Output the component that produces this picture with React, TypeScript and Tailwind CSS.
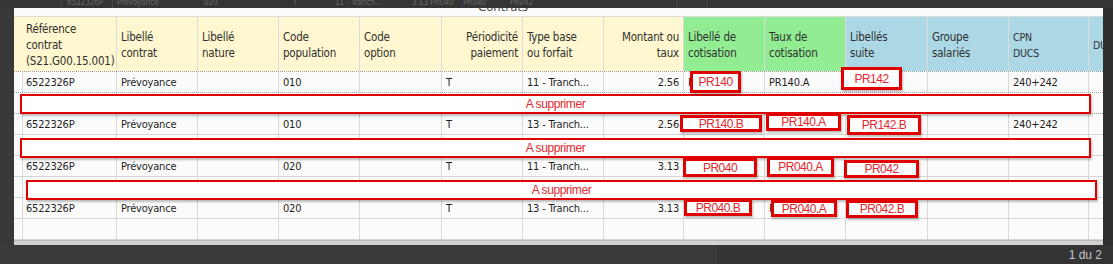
import React from "react";

const Y = "bg-[#fff7cf]";
const G = "bg-[#92ec92]";
const B = "bg-[#acd8e6]";

type H = { t: React.ReactNode; bg: string; right?: boolean; small?: boolean };

const headers: H[] = [
  { t: null, bg: Y },
  { t: <>Référence<br />contrat<br />(S21.G00.15.001)</>, bg: Y },
  { t: <>Libellé<br />contrat</>, bg: Y },
  { t: <>Libellé<br />nature</>, bg: Y },
  { t: <>Code<br />population</>, bg: Y },
  { t: <>Code<br />option</>, bg: Y },
  { t: <>Périodicité<br />paiement</>, bg: Y, right: true },
  { t: <>Type base<br />ou forfait</>, bg: Y },
  { t: <>Montant ou<br />taux</>, bg: Y, right: true },
  { t: <>Libellé de<br />cotisation</>, bg: G },
  { t: <>Taux de<br />cotisation</>, bg: G },
  { t: <>Libellés<br />suite</>, bg: B },
  { t: <>Groupe<br />salariés</>, bg: B },
  { t: <>CPN<br />DUCS</>, bg: B, small: true },
  { t: <>DUCS</>, bg: B, small: true },
];

const E = ["", "", "", "", "", "", "", "", "", "", "", "", "", "", ""];

const rows: { c: string[]; dotted?: boolean }[] = [
  { c: ["", "6522326P", "Prévoyance", "", "010", "", "T", "11 - Tranch...", "2.56", "PR140", "PR140.A", "PR142", "", "240+242", ""], dotted: true },
  { c: E, dotted: true },
  { c: ["", "6522326P", "Prévoyance", "", "010", "", "T", "13 - Tranch...", "2.56", "PR140.B", "PR140.A", "PR142.B", "", "240+242", ""] },
  { c: E },
  { c: ["", "6522326P", "Prévoyance", "", "020", "", "T", "11 - Tranch...", "3.13", "PR040", "PR040.A", "PR042", "", "", ""] },
  { c: E },
  { c: ["", "6522326P", "Prévoyance", "", "020", "", "T", "13 - Tranch...", "3.13", "PR040.B", "PR040.A", "PR042.B", "", "", ""] },
  { c: E },
];

const bigBoxes = [
  { l: 6, t: 86, w: 1071 },
  { l: 6, t: 130, w: 1071 },
  { l: 12, t: 172, w: 1071 },
];

const labels = [
  { x: 676, y: 63, w: 51, h: 22, t: "PR140" },
  { x: 827, y: 59, w: 61, h: 23, t: "PR142" },
  { x: 666, y: 107, w: 82, h: 17, t: "PR140.B" },
  { x: 752, y: 105, w: 75, h: 18, t: "PR140.A" },
  { x: 833, y: 107, w: 74, h: 20, t: "PR142.B" },
  { x: 669, y: 150, w: 74, h: 19, t: "PR040" },
  { x: 753, y: 149, w: 67, h: 20, t: "PR040.A" },
  { x: 830, y: 152, w: 75, h: 18, t: "PR042" },
  { x: 670, y: 191, w: 68, h: 17, t: "PR040.B" },
  { x: 757, y: 192, w: 66, h: 17, t: "PR040.A" },
  { x: 832, y: 192, w: 72, h: 18, t: "PR042.B" },
];

const grid =
  "grid grid-cols-[8px_95px_81px_81px_81px_82px_81px_81px_80px_81px_81px_82px_81px_80px_80px]";
const tableFont =
  "font-['DejaVu_Sans_Condensed','DejaVu_Sans','Noto_Sans',sans-serif] font-stretch-condensed";
const redFont = "font-['Liberation_Sans',Arial,sans-serif]";

export default function App() {
  return (
    <div className="w-[1113px] h-[264px] bg-[#3a3a3a] flex flex-col overflow-hidden">
      {/* faded background strip */}
      <div className={`h-[8px] shrink-0 bg-[#353535] overflow-hidden flex text-[8px] leading-[8px] text-[#6a6a6a] whitespace-nowrap ${tableFont}`}>
        <span className="w-[62px] border-r border-[#454545]" />
        <span className="w-[51px] pl-[5px] border-r border-[#454545] -mt-[1px]">6522326P</span>
        <span className="w-[91px] pl-[4px] -mt-[1px]">Prévoyance</span>
        <span className="w-[89px] -mt-[1px]">020</span>
        <span className="w-[42px] -mt-[1px]">T</span>
        <span className="w-[77px] -mt-[1px]">11 - Tranch...</span>
        <span className="w-[51px] -mt-[1px]">3.13 PR040</span>
        <span className="w-[47px] -mt-[1px]">PR040</span>
        <span className="w-[166px] -mt-[1px]">PR042</span>
        <span className="w-[31px] border-l border-[#454545] bg-[#383838]" />
        <span className="flex-1 border-l border-[#454545]" />
      </div>

      <div className="flex h-[237px] shrink-0">
        <div className="w-[14px] bg-[#383838]" />
        <div className={`relative w-[1089px] h-[237px] bg-white overflow-hidden flex flex-col ${tableFont}`}>
          {/* top strip */}
          <div className="h-[9px] shrink-0 bg-[#fbfbfd] border-b border-[#dcdcdc] overflow-visible">
            <div className="pl-[464px] -mt-[8px] text-[13px] leading-[13px] text-[#4a4a4a]">Contrats</div>
          </div>

          {/* header */}
          <div className={`${grid} h-[55px] shrink-0 border-b border-dotted border-[#9a9a9a]`}>
            {headers.map((h, i) => (
              <div
                key={i}
                className={`${h.bg} border-r border-[#dadada] px-[4px] pt-[2px] flex items-center overflow-hidden whitespace-nowrap text-[#303030] ${
                  h.small ? "text-[10.5px] leading-[16px] tracking-[-0.2px]" : "text-[11.5px] leading-[16px] tracking-[-0.2px]"
                } ${h.right ? "justify-end text-right" : ""}`}
              >
                <div>{h.t}</div>
              </div>
            ))}
          </div>

          {/* rows */}
          {rows.map((r, ri) => (
            <div
              key={ri}
              className={`${grid} h-[21px] shrink-0 bg-[#fbfbfb] border-b ${
                r.dotted ? "border-dotted border-[#9a9a9a]" : "border-solid border-[#d6d6d6]"
              }`}
            >
              {r.c.map((c, ci) => (
                <div
                  key={ci}
                  className={`border-r border-[#d8d8d8] px-[4px] pt-[2px] flex items-center overflow-hidden whitespace-nowrap text-[11px] leading-[14px] tracking-[-0.2px] text-[#1e1e1e] ${
                    ci === 8 ? "justify-end" : ""
                  }`}
                >
                  {c}
                </div>
              ))}
            </div>
          ))}

          {/* bottom scroll bar */}
          <div className="h-[5px] shrink-0 bg-[#d2d2d2] border-t border-[#b8b8b8]" />

          {/* overlays: "A supprimer" boxes */}
          {bigBoxes.map((b, i) => (
            <div
              key={i}
              className={`absolute h-[20px] border-2 border-[#e00000] bg-white flex items-center justify-center shadow-[1px_2px_2px_rgba(0,0,0,0.25)] ${redFont} text-[12px] leading-none tracking-[-0.4px] text-[#e3262d]`}
              style={{ left: b.l, top: b.t, width: b.w }}
            >
              A supprimer
            </div>
          ))}

          {/* overlays: label boxes */}
          {labels.map((b, i) => (
            <div
              key={i}
              className={`absolute border-[3px] border-[#e00000] bg-white flex items-center justify-center shadow-[1px_2px_2px_rgba(0,0,0,0.25)] ${redFont} text-[12px] leading-none tracking-[-0.5px] text-[#e3262d]`}
              style={{ left: b.x, top: b.y, width: b.w, height: b.h }}
            >
              {b.t}
            </div>
          ))}
        </div>
        <div className="flex-1 bg-[#303030]" />
      </div>

      <div className="flex h-[19px] shrink-0">
        <div className="w-[717px] bg-[#3a3a3a]" />
        <div className={`flex-1 bg-[#343434] flex items-center justify-end pr-[11px] text-[12px] leading-none text-[#c4c4c4] ${redFont}`}>
          1 du 2
        </div>
      </div>
    </div>
  );
}
